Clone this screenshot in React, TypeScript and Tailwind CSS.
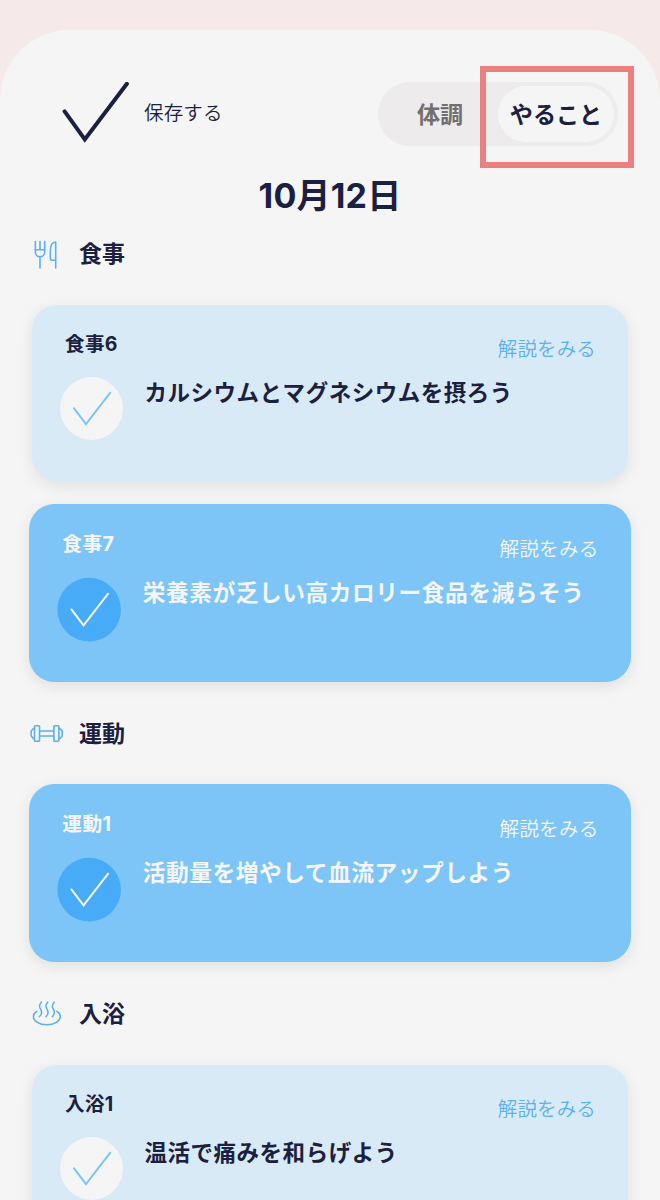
import clsx from "clsx";

interface Task {
  id: string;
  label: string;
  title: string;
  done: boolean;
}

interface Section {
  name: string;
  icon: React.ReactNode;
  tasks: Task[];
}

const MealIcon = () => (
  <svg width="34" height="34" viewBox="0 0 34 34" fill="none" stroke="#5ab0f0" strokeWidth="1.6" strokeLinecap="round" strokeLinejoin="round">
    <path d="M5.3 4.5v10.6a4.7 4.7 0 0 0 9.4 0V4.5M10 4.5v8.2M5.3 12.7h9.4M10 20v11" />
    <path d="M25.7 31V5c-3.6 0-5.4 4.5-5.4 10v6.2a2 2 0 0 0 2 2h3.4" />
  </svg>
);

const ExerciseIcon = () => (
  <svg width="34" height="34" viewBox="0 0 34 34" fill="none" stroke="#5ab0f0" strokeWidth="1.6" strokeLinejoin="round">
    <rect x="4.5" y="8.7" width="5" height="15.6" rx="0.8" />
    <rect x="23.9" y="8.7" width="5" height="15.6" rx="0.8" />
    <path d="M4.5 11.5H3.4L1.2 14v5l2.2 2.5h1.1M28.9 11.5H30l2.2 2.5v5L30 21.5h-1.1" />
    <path d="M9.5 14h14.4M9.5 19h14.4" />
  </svg>
);

const BathIcon = () => (
  <svg width="34" height="34" viewBox="0 0 34 34" fill="none" stroke="#5ab0f0" strokeWidth="1.6" strokeLinecap="round">
    <path d="M6.8 14.4c-2.2 1.2-3.4 2.9-3.4 5.1 0 4.7 6 8.3 13.4 8.3s13.4-3.6 13.4-8.3c0-2.2-1.2-3.9-3.4-5.1" />
    <path d="M11.3 5.2c-4.6 5.4 1 6.8.3 10.8-.2 1.4-.9 2.6-2.1 3.6M17.7 5.2c-4.6 5.4 1 6.8.3 10.8-.2 1.4-.9 2.6-2.1 3.6M24.1 5.2c-4.6 5.4 1 6.8.3 10.8-.2 1.4-.9 2.6-2.1 3.6" />
  </svg>
);

const sections: Section[] = [
  {
    name: "食事",
    icon: <MealIcon />,
    tasks: [
      { id: "meal6", label: "食事6", title: "カルシウムとマグネシウムを摂ろう", done: false },
      { id: "meal7", label: "食事7", title: "栄養素が乏しい高カロリー食品を減らそう", done: true },
    ],
  },
  {
    name: "運動",
    icon: <ExerciseIcon />,
    tasks: [{ id: "exercise1", label: "運動1", title: "活動量を増やして血流アップしよう", done: true }],
  },
  {
    name: "入浴",
    icon: <BathIcon />,
    tasks: [{ id: "bath1", label: "入浴1", title: "温活で痛みを和らげよう", done: false }],
  },
];

function TaskCard({ task }: { task: Task }) {
  return (
    <div
      className={clsx(
        "h-[176px] shrink-0 rounded-[25px] pt-6 pl-7 pr-8 shadow-[0_4px_16px_rgba(0,0,0,0.09)]",
        task.done ? "scale-[1.01] bg-[#7cc5f6] text-[#f5f5f5]" : "bg-[#d8eaf6] text-[#1b2040]"
      )}
    >
      <div className="flex h-12 justify-between pl-[5px]">
        <span className="text-[19.5px] leading-[31px] font-bold tracking-[0.4px]">{task.label}</span>
        <button className={clsx("h-10 text-[19.5px] leading-10 font-[350] tracking-[0.15px]", task.done ? "text-[#f5f5f5]" : "text-[#5ab0f0]")}>
          解説をみる
        </button>
      </div>
      <div className="flex gap-[21.5px]">
        <div className={clsx("mt-px size-[63px] shrink-0 rounded-full", task.done ? "bg-[#48abf7]" : "-translate-y-px bg-[#f5f5f5]")}>
          <svg width="63" height="63" viewBox="0 0 63 63" fill="none" stroke={task.done ? "#f5f5f5" : "#7cc5f6"} strokeWidth="2" strokeLinecap="round">
            <path d="M14 31.3 26 47 50.3 15.7" />
          </svg>
        </div>
        <h3 className="h-[30px] text-[22.5px] leading-[31px] font-semibold tracking-[0.52px] whitespace-nowrap">{task.title}</h3>
      </div>
    </div>
  );
}

export default function App() {
  return (
    <div className="h-[1200px] w-[660px] overflow-hidden bg-[#f5e9e9] pt-[30px] font-['Inter','Noto_Sans_CJK_JP',sans-serif] text-[#1b2040]" lang="ja">
      <main className="flex h-[1170px] flex-col overflow-hidden rounded-t-[70px] bg-[#f5f5f5] px-8">
        <header className="mt-[52px] flex h-16 shrink-0 items-center justify-between pr-[10px] pl-[30px]">
          <button className="flex items-center gap-3.5">
            <svg width="68" height="64" viewBox="0 0 68 64" fill="none" stroke="#1b2040" strokeWidth="4" strokeLinecap="round">
              <path d="M2.6 29.4 22.8 57.4 64.9 1.8" />
            </svg>
            <span className="text-[19.5px] font-[350] tracking-[0.15px]">保存する</span>
          </button>
          <div className="relative flex h-16 w-60 items-center rounded-full bg-[#edebec] p-1 text-[23.1px] font-semibold">
            <button className="flex-1 pt-0.5 text-[#707070]">体調</button>
            <button className="h-14 w-29 rounded-full bg-[#f5f5f5] pt-0.5">やること</button>
            <div className="absolute -top-4 -right-4 h-[102px] w-[154px] border-6 border-[#ea8080]" />
          </div>
        </header>
        <h1 className="mt-[25px] h-[50px] shrink-0 text-center text-[34px] leading-[50px] font-bold tracking-[0.2px]">10月12日</h1>

        <div className="mt-[9px] flex flex-col gap-[29px]">
          {sections.map((section) => (
            <section key={section.name}>
              <div className="-ml-[2px] flex h-12 items-center gap-[15px]">
                {section.icon}
                <h2 className="pt-px text-[23px] font-semibold">{section.name}</h2>
              </div>
              <div className="mt-[27px] flex flex-col gap-6">
                {section.tasks.map((task) => (
                  <TaskCard key={task.id} task={task} />
                ))}
              </div>
            </section>
          ))}
        </div>
      </main>
    </div>
  );
}
